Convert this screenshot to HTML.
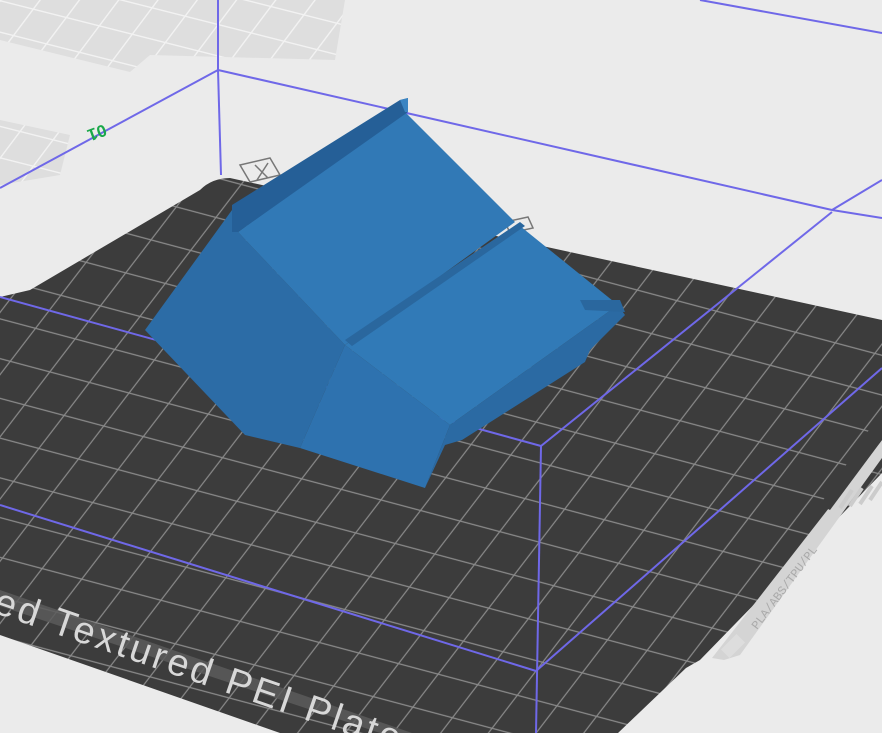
<!DOCTYPE html>
<html><head><meta charset="utf-8"><style>
html,body{margin:0;padding:0;width:882px;height:733px;overflow:hidden;background:#ebebeb}
svg{display:block}
</style></head><body>
<svg width="882" height="733" viewBox="0 0 882 733" xmlns="http://www.w3.org/2000/svg">
<defs>
<pattern id="g" width="22" height="22" patternUnits="userSpaceOnUse" patternTransform="matrix(1.8,0.48,-1.15,1.5,0,0)">
<rect width="22" height="22" fill="#3c3c3c"/>
<path d="M0 0.5H22M0.5 0V22" stroke="#8a8a8a" stroke-width="0.7" fill="none"/>
</pattern>
<pattern id="lg" width="22" height="22" patternUnits="userSpaceOnUse" patternTransform="matrix(1.5,0.38,-0.9,1.2,0,0)">
<rect width="22" height="22" fill="#dedede"/>
<path d="M0 0.5H22M0.5 0V22" stroke="#f2f2f2" stroke-width="1" fill="none"/>
</pattern>
</defs>
<rect width="882" height="733" fill="#ebebeb"/>
<polygon points="0,0 345,0 335,60 150,55 130,72 0,40" fill="url(#lg)"/>
<polygon points="0,120 70,135 60,175 0,185" fill="url(#lg)"/>
<path d="M230,178 L882,320 L882,473 L700,660 L686,668 L618,733 L280,733 L0,635 L0,297 L30,290 L200,190 Q212,178 230,178 Z" fill="url(#g)"/>
<polygon points="0,590 412,733 380,733 0,606" fill="#5a5a5a" opacity="0.85"/>
<text transform="translate(-8,612) rotate(19)" font-family="Liberation Sans, sans-serif" font-size="38" fill="#d8d8d8" letter-spacing="3">ed Textured PEI Plate</text>
<polygon points="882,440 882,458 740,655 724,660 712,658" fill="#d4d4d4"/>
<polygon points="882,410 882,440 830,510 820,505" fill="#3c3c3c"/>
<g stroke="#ccc" stroke-width="4">
<line x1="840" y1="508" x2="852" y2="490"/><line x1="850" y1="506" x2="862" y2="488"/><line x1="860" y1="504" x2="872" y2="486"/><line x1="870" y1="500" x2="882" y2="482"/>
</g>
<text transform="translate(757,630) rotate(-53)" font-family="Liberation Mono, monospace" font-size="12" fill="#aaa">PLA/ABS/TPU/PL</text>
<rect x="722" y="640" width="22" height="12" fill="#ddd" transform="rotate(-45 733 646)"/>
<g stroke="#6f68e8" stroke-width="2" fill="none">
<line x1="218" y1="0" x2="218" y2="70"/>
<line x1="218" y1="70" x2="221" y2="175"/>
<line x1="218" y1="70" x2="0" y2="188"/>
<line x1="218" y1="70" x2="832" y2="210"/>
<line x1="832" y1="210" x2="882" y2="180"/>
<line x1="832" y1="210" x2="882" y2="218"/>
<line x1="700" y1="0" x2="882" y2="33"/>
<line x1="0" y1="297" x2="541" y2="446"/>
<line x1="541" y1="446" x2="832" y2="212"/>
<line x1="541" y1="446" x2="536" y2="733"/>
<line x1="0" y1="505" x2="536" y2="671"/>
<line x1="536" y1="671" x2="882" y2="368"/>
</g>
<text transform="translate(104,124) rotate(160)" font-family="Liberation Sans, sans-serif" font-weight="bold" font-size="17" fill="#1aa84a">01</text>
<g stroke="#777" stroke-width="1.5" fill="none"><polygon points="240,165 270,158 280,175 250,182"/><path d="M255,165 L268,178 M268,163 L257,180"/></g>
<g stroke="#777" stroke-width="1.5" fill="none"><polygon points="505,222 528,217 533,228 510,233"/></g>
<polygon points="145,330 232,210 238,232 345,345 300,448 245,435" fill="#2c6ca6"/>
<polygon points="345,345 450,425 425,488 300,448" fill="#2e72af"/>
<polygon points="238,232 405,112 515,222 345,345" fill="#3179b6"/>
<polygon points="345,345 520,226 618,305 450,425" fill="#317ab7"/>
<polygon points="450,425 618,305 625,315 590,350 585,362 462,440 445,445 425,488" fill="#2b6aa3"/>
<polygon points="232,205 400,100 408,98 408,112 238,232 232,232" fill="#255f97"/>
<polygon points="400,100 408,98 408,112 405,112" fill="#3a84c2"/>
<polygon points="345,340 520,222 525,226 352,346" fill="#2a679e"/>
<polygon points="580,300 620,300 625,312 585,310" fill="#2a679e"/>
</svg>
</body></html>
